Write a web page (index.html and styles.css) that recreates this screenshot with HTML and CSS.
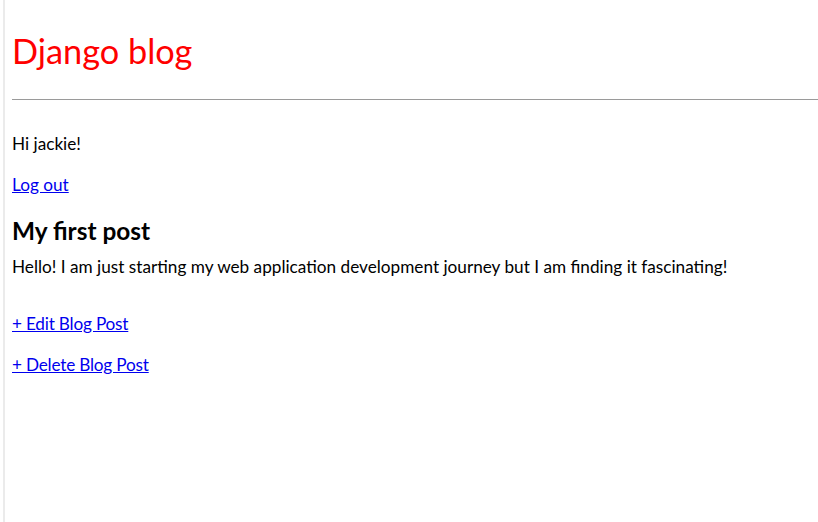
FILE: index.html
```html
<!DOCTYPE html>
<html lang="en">
<head>
<meta charset="utf-8">
<title>Django blog</title>
<link rel="stylesheet" href="styles.css">
</head>
<body>
<header class="site-header">
  <h1 class="site-title">Django blog</h1>
  <hr class="rule">
</header>
<main class="content">
  <p class="greeting">Hi jackie!</p>
  <p class="logout"><a href="#">Log out</a></p>
  <article class="post">
    <h2 class="post-title">My first post</h2>
    <p class="post-body">Hello! I am just starting my web application development journey but I am finding it fascinating!</p>
  </article>
  <p class="action action-edit"><a href="#">+ Edit Blog Post</a></p>
  <p class="action action-delete"><a href="#">+ Delete Blog Post</a></p>
</main>
</body>
</html>
```
FILE: styles.css
```css
html {
  background: linear-gradient(to right, #fff 0, #fff 3px, #ebebeb 3px, #ebebeb 5px, #fff 5px) #fff;
  min-height: 100%;
}
body {
  margin: 0 0 0 12px;
  font-family: Lato, "Noto Sans", sans-serif;
  font-size: 17.2px;
  line-height: 22px;
  color: #000;
}
a { color: #0000ee; }
p { margin: 0; }
.site-title {
  margin: 31px 0 0;
  font-size: 34.3px;
  line-height: 40px;
  font-weight: 400;
  color: #ff0000;
}
.rule {
  margin: 28px 0 0;
  height: 0;
  border: 0;
  border-top: 1px solid #9a9a9a;
}
.greeting { margin-top: 33px; }
.logout { margin-top: 19px; }
.post-title {
  margin: 20px 0 0;
  font-size: 24.4px;
  line-height: 30px;
  font-weight: 700;
}
.post-body { margin-top: 10px; }
.action-edit { margin-top: 35px; }
.action-delete { margin-top: 19px; }
.action a { letter-spacing: -0.2px; }
```
